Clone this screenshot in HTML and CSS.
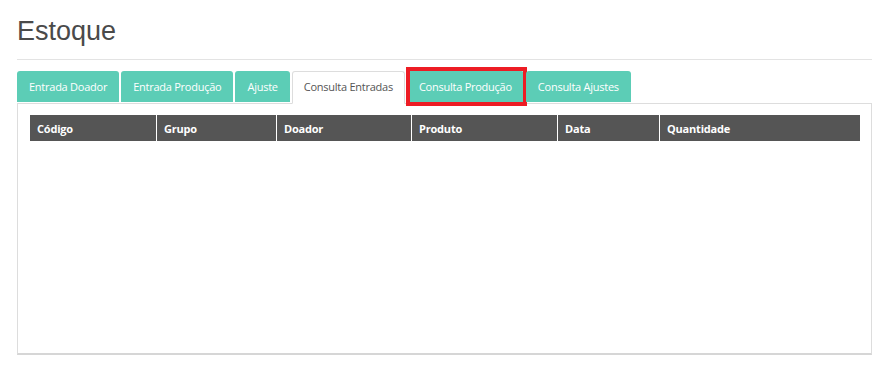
FILE: index.html
```html
<!DOCTYPE html>
<html lang="pt-BR">
<head>
    <meta charset="UTF-8">
    <title>Estoque</title>
    <link rel="stylesheet" href="styles.css">
</head>
<body>
    <div class="page">
        <h1 class="page-title">Estoque</h1>
        <ul class="tabs">
            <li class="tab">Entrada Doador</li>
            <li class="tab">Entrada Produção</li>
            <li class="tab">Ajuste</li>
            <li class="tab active">Consulta Entradas</li>
            <li class="tab marked">Consulta Produção</li>
            <li class="tab">Consulta Ajustes</li>
        </ul>
        <div class="tab-panel">
            <table class="grid">
                <thead>
                    <tr>
                        <th class="col-codigo">Código</th>
                        <th class="col-grupo">Grupo</th>
                        <th class="col-doador">Doador</th>
                        <th class="col-produto">Produto</th>
                        <th class="col-data">Data</th>
                        <th>Quantidade</th>
                    </tr>
                </thead>
                <tbody></tbody>
            </table>
        </div>
    </div>
</body>
</html>
```

FILE: styles.css
```css
body {
    margin: 0;
    background-color: #fff;
    font-family: 'Open Sans', sans-serif;
}
.page {
    padding: 0 19px 0 17px;
}
.page-title {
    margin: 0;
    padding: 15px 0 12px;
    font-family: 'Liberation Sans', Arial, sans-serif;
    font-size: 27px;
    font-weight: normal;
    line-height: 32px;
    color: #4a4a4a;
    border-bottom: 1px solid #e3e3e3;
}
.tabs {
    display: flex;
    list-style: none;
    margin: 11px 0 0;
    padding: 0;
}
.tab {
    position: relative;
    margin-right: 2px;
    padding: 0 12px;
    height: 31px;
    line-height: 31px;
    font-size: 11px;
    letter-spacing: -0.25px;
    color: #fff;
    background-color: #5ccdb6;
    border-radius: 3px 3px 0 0;
}
.tab.active {
    height: 31px;
    line-height: 30px;
    padding: 0 11px;
    color: #555;
    background-color: #fff;
    border: 1px solid #ddd;
    border-bottom-color: #fff;
    margin-bottom: -1px;
    z-index: 1;
}
.tab.marked::after {
    content: '';
    position: absolute;
    top: -4px;
    left: -1px;
    right: -3px;
    bottom: -4px;
    border: 4px solid #ed1c24;
}
.tab-panel {
    height: 238px;
    padding: 11px 11px 0 12px;
    border: 1px solid #ddd;
    border-bottom: 2px solid #d6d6d6;
}
.grid {
    width: 100%;
    border-collapse: collapse;
}
.grid th {
    height: 26px;
    padding: 0 7px;
    text-align: left;
    font-size: 11px;
    letter-spacing: -0.2px;
    font-weight: bold;
    color: #fff;
    background-color: #555;
    border-left: 1px solid #fff;
}
.grid th:first-child {
    border-left: none;
}
.col-codigo { width: 112px; }
.col-grupo { width: 105px; }
.col-doador { width: 120px; }
.col-produto { width: 131px; }
.col-data { width: 87px; }
```
